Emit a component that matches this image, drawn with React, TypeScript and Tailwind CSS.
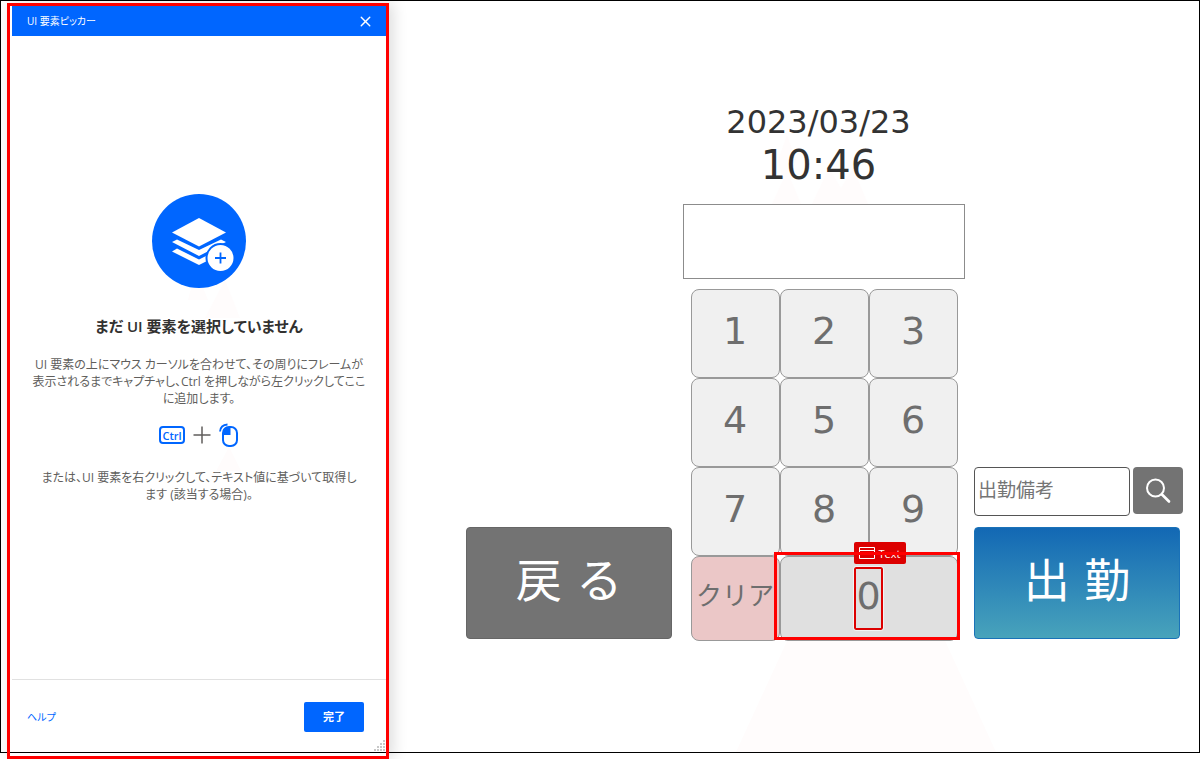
import React, { useState } from 'react';
import { X } from 'lucide-react';

const digits = ['1', '2', '3', '4', '5', '6', '7', '8', '9'];

const Watermark: React.FC = () => (
  <svg
    className="absolute left-0 top-0 pointer-events-none"
    width="1200"
    height="752"
    viewBox="0 0 1200 752"
    fill="#fffcfc"
    aria-hidden="true"
  >
    <path d="M866 468 L996 752 H736 L787 641 Z" />
    <path d="M787 135 L796 160 L791 180 L801 204 H772 L783 180 L778 160 Z" />
    <path d="M829 168 L841 188 L853 168 L868 204 H812 Z" />
    <path d="M196 270 L208 300 H188 Z" />
    <path d="M225 280 L240 318 H205 Z" />
    <path d="M229 447 L241 471 H216 Z" />
  </svg>
);

const LayersIcon: React.FC = () => (
  <svg width="94" height="94" viewBox="0 0 94 94" aria-hidden="true">
    <circle cx="47" cy="47" r="47" fill="#0066ff" />
    <g fill="#fff">
      <path d="M47 24 L74 38.500 L47 52.500 L20 38.500 Z" />
      <path d="M20 48 L25 45.500 L47 56 L69 45.500 L74 48 L47 62 Z" />
      <path d="M20 57.500 L25 54.500 L47 65.500 L69 54.500 L74 57.500 L47 71 Z" />
    </g>
    <circle cx="68.500" cy="64" r="14" fill="#fff" stroke="#0066ff" strokeWidth="2" />
    <path d="M68.500 58.500 V69.500 M63 64 H74" stroke="#0066ff" strokeWidth="1.800" />
  </svg>
);

const MouseIcon: React.FC = () => (
  <svg width="20" height="24" viewBox="0 0 20 24" fill="none" aria-hidden="true">
    <rect x="4" y="4" width="14" height="19" rx="6" stroke="#0066ff" strokeWidth="2" />
    <path d="M4 12 V8 Q5 4 9 4 H11.500 V12 Z" fill="#0066ff" />
    <path d="M1 8.500 Q1.500 2 8.500 1.500" stroke="#0066ff" strokeWidth="1.800" />
  </svg>
);

const SearchIcon: React.FC = () => (
  <svg width="26" height="26" viewBox="0 0 26 26" fill="none" stroke="#fff" strokeLinecap="round" aria-hidden="true">
    <circle cx="10.500" cy="10" r="8.500" strokeWidth="2" />
    <path d="M17 16.500 L24 23.500" strokeWidth="2.600" />
  </svg>
);

const Grip: React.FC = () => (
  <svg className="absolute right-1 bottom-2" width="12" height="12" viewBox="0 0 12 12" fill="#c8c8c8" aria-hidden="true">
    <path d="M10 1h2v2h-2z M10 4h2v2h-2z M7 4h2v2h-2z M10 7h2v2h-2z M7 7h2v2h-2z M4 7h2v2h-2z M10 10h2v2h-2z M7 10h2v2h-2z M4 10h2v2h-2z M1 10h2v2h-2z" />
  </svg>
);

const PickerPanel: React.FC = () => (
  <aside className="relative w-[382px] shrink-0 ml-[7px] mt-[3px] pt-[3px] pl-[5px] pr-[3px] flex flex-col shadow-[4px_0_14px_rgba(0,0,0,0.14)] font-['Open_Sans','Noto_Sans_CJK_JP',sans-serif] [font-feature-settings:'palt']">
    <header className="h-[30px] bg-[#0066ff] text-white flex items-center justify-between pl-[15px] pr-3">
      <h1 className="text-[10px]">UI 要素ピッカー</h1>
      <button aria-label="閉じる">
        <X size={17} strokeWidth={2} />
      </button>
    </header>

    <div className="flex-1 flex flex-col items-center justify-center pb-[18px] text-center text-[#605e5c]">
      <LayersIcon />
      <h2 className="mt-[26px] text-[15px] leading-6 font-semibold text-[#323130]">
        まだ UI 要素を選択していません
      </h2>
      <p className="mt-[18px] text-[12px] leading-[17px]">
        UI 要素の上にマウス カーソルを合わせて、その周りにフレームが
        <br />
        表示されるまでキャプチャし、Ctrl を押しながら左クリックしてここ
        <br />
        に追加します。
      </p>
      <div className="mt-4 flex items-center gap-2">
        <kbd className="w-[26px] h-[18px] border-2 border-[#0066ff] rounded-sm flex items-center justify-center text-[11px] leading-none font-semibold text-[#0066ff] font-['Open_Sans',sans-serif]">
          Ctrl
        </kbd>
        <svg width="18" height="18" viewBox="0 0 18 18" stroke="#605e5c" strokeWidth="1.500" aria-hidden="true">
          <path d="M9 0.500 V17.500 M0.500 9 H17.500" />
        </svg>
        <MouseIcon />
      </div>
      <p className="mt-[22px] text-[12px] leading-[17px]">
        または、UI 要素を右クリックして、テキスト値に基づいて取得し
        <br />
        ます (該当する場合)。
      </p>
    </div>

    <footer className="h-[80px] border-t border-[#e1e1e1] flex items-start justify-between pl-[15px] pr-[22px] pt-[22px]">
      <a href="#help" className="text-[10px] leading-[30px] text-[#0066ff]">ヘルプ</a>
      <button className="w-[60px] h-[30px] rounded-xs bg-[#0066ff] text-white text-[11px] font-semibold">完了</button>
    </footer>
    <Grip />
    <div className="absolute inset-0 z-20 border-3 border-[#ff0000] pointer-events-none" />
  </aside>
);

const ElementTag: React.FC = () => (
  <span className="absolute left-[73px] -top-[15px] z-20 h-[22px] w-[52px] rounded-xs bg-[#dc0000] flex items-center gap-1 pl-[5px] text-[11px] leading-none text-white font-['Open_Sans',sans-serif]">
    <svg width="16" height="12" viewBox="0 0 16 12" fill="none" stroke="#fff" aria-hidden="true">
      <path d="M0.500 0.500 H15.500 V11.500 H0.500 Z M0.500 3.500 H15.500" />
    </svg>
    Text
  </span>
);

const Keypad: React.FC<{ onPress: (digit: string) => void; onClear: () => void }> = ({ onPress, onClear }) => (
  <div className="w-[267px] grid grid-cols-3 text-[38px] text-[#6e6e6e]">
    {digits.map((digit) => (
      <button
        key={digit}
        onClick={() => onPress(digit)}
        className="h-[89px] pb-1 rounded-lg border border-[#999] bg-[#f0f0f0]"
      >
        {digit}
      </button>
    ))}
    <button
      onClick={onClear}
      className="h-[85px] pb-1 rounded-lg border border-[#999] bg-[#ebc7c7] text-[26px] whitespace-nowrap flex items-center justify-center"
    >
      クリア
    </button>
    <button
      onClick={() => onPress('0')}
      className="relative col-span-2 h-[85px] rounded-lg border border-[#999] bg-[#e0e0e0] flex items-center justify-center"
    >
      <span className="w-[29px] h-[63px] rounded-xs border-2 border-[#dc0000] outline outline-white/60 flex items-center justify-center pb-1">
        0
      </span>
      <ElementTag />
      <span className="absolute -left-[7px] -right-[3px] -top-[5px] bottom-0 z-30 border-[3px] border-[#ff0000]" />
    </button>
  </div>
);

const Kiosk: React.FC = () => {
  const [code, setCode] = useState('');

  return (
    <main className="relative flex-1 flex justify-end items-start pt-[102px] pr-[17px] font-['DejaVu_Sans','Noto_Sans_CJK_JP',sans-serif]">
      <div className="flex items-end">
        <button className="w-[206px] h-[112px] mr-[11px] mb-[2px] rounded-sm border border-[#666] bg-[#737373] text-white text-[46px] leading-none pb-1">
          戻 る
        </button>

        <div className="w-[282px] flex flex-col items-center text-[#333]">
          <time className="pr-[11px] text-[32px] leading-10">2023/03/23</time>
          <time className="pr-[11px] text-[40px] leading-[46px]">10:46</time>
          <input
            aria-label="社員番号"
            value={code}
            onChange={(e) => setCode(e.target.value)}
            className="mt-4 mb-[10px] w-full h-[75px] border border-[#8c8c8c] bg-white text-center text-[38px] outline-none"
          />
          <Keypad onPress={(digit) => setCode(code + digit)} onClear={() => setCode('')} />
        </div>

        <div className="ml-[9px] mb-[2px] flex flex-col gap-[11px]">
          <div className="flex items-start gap-[3px]">
            <input
              aria-label="出勤備考"
              placeholder="出勤備考"
              className="w-[156px] h-[49px] pl-[3px] pb-1 rounded-sm border border-[#555] bg-white text-[19px] placeholder:text-[#757575] outline-none"
            />
            <button aria-label="検索" className="w-[50px] h-[47px] rounded-sm bg-[#737373] flex items-center justify-center">
              <SearchIcon />
            </button>
          </div>
          <button className="w-[206px] h-[112px] rounded-sm border border-[#1a72b8] bg-linear-to-b from-[#1268b4] to-[#48a3bb] text-white text-[46px] leading-none pb-1">
            出 勤
          </button>
        </div>
      </div>
    </main>
  );
};

const App: React.FC = () => {
  return (
    <div className="relative min-h-screen flex bg-white overflow-hidden">
      <Watermark />
      <PickerPanel />
      <Kiosk />
      <div className="absolute inset-x-0 top-0 bottom-[6px] z-10 border border-black pointer-events-none" />
    </div>
  );
};

export default App;
